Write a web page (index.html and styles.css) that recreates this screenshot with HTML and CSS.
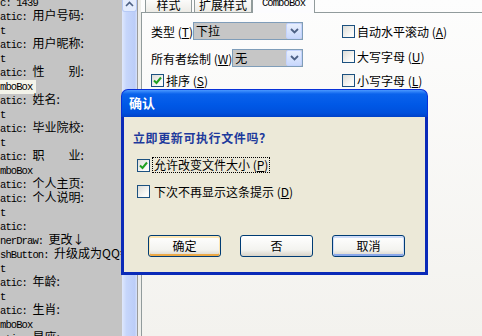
FILE: index.html
```html
<!DOCTYPE html>
<html lang="zh-CN">
<head>
    <meta charset="UTF-8">
    <meta name="viewport" content="width=device-width, initial-scale=1.0">
    <title>确认</title>
    <link rel="stylesheet" href="styles.css">
</head>
<body>
    <div class="screen">
        <!-- 左边: 资源脚本 -->
        <div class="source">
            <div class="ln"><span class="k">c: 1439</span></div>
            <div class="ln"><span class="k">atic: </span>用户号码:</div>
            <div class="ln"><span class="k">t</span></div>
            <div class="ln"><span class="k">atic: </span>用户昵称:</div>
            <div class="ln"><span class="k">t</span></div>
            <div class="ln"><span class="k">atic: </span>性　　别:</div>
            <div class="ln"><span class="k hl">mboBox</span></div>
            <div class="ln"><span class="k">atic: </span>姓名:</div>
            <div class="ln"><span class="k">t</span></div>
            <div class="ln"><span class="k">atic: </span>毕业院校:</div>
            <div class="ln"><span class="k">t</span></div>
            <div class="ln"><span class="k">atic: </span>职　　业:</div>
            <div class="ln"><span class="k">mboBox</span></div>
            <div class="ln"><span class="k">atic: </span>个人主页:</div>
            <div class="ln"><span class="k">atic: </span>个人说明:</div>
            <div class="ln"><span class="k">t</span></div>
            <div class="ln"><span class="k">atic:</span></div>
            <div class="ln"><span class="k">nerDraw: </span>更改↓</div>
            <div class="ln"><span class="k">shButton: </span>升级成为QQ会</div>
            <div class="ln"><span class="k">t</span></div>
            <div class="ln"><span class="k">atic: </span>年龄:</div>
            <div class="ln"><span class="k">t</span></div>
            <div class="ln"><span class="k">atic: </span>生肖:</div>
            <div class="ln"><span class="k">mboBox</span></div>
            <div class="ln"><span class="k">atic: </span>星座:</div>
        </div>
        <!-- 滚动条 -->
        <div class="vscroll">
            <div class="up">
                <svg width="9" height="6" viewBox="0 0 9 6"><polyline points="1,5 4.5,1.5 8,5" fill="none" stroke="#4d6185" stroke-width="1.6"/></svg>
            </div>
        </div>
        <div class="split"></div>
        <!-- 右边: 属性页 -->
        <div class="editor">
            <div class="tabs">
                <div class="tab t1">样式</div>
                <div class="tab t2">扩展样式</div>
                <div class="tab t3 on">ComboBox</div>
            </div>
            <div class="page">
                <div class="col left">
                    <div class="row r1">
                        <span>类型 (<u>T</u>)</span>
                        <div class="combo w1"><span>下拉</span><i class="drop"><svg width="9" height="6" viewBox="0 0 9 6"><polyline points="1,1 4.5,4.5 8,1" fill="none" stroke="#4d6185" stroke-width="1.8"/></svg></i></div>
                    </div>
                    <div class="row r2">
                        <span>所有者绘制 (<u>W</u>)</span>
                        <div class="combo w2"><span>无</span><i class="drop"><svg width="9" height="6" viewBox="0 0 9 6"><polyline points="1,1 4.5,4.5 8,1" fill="none" stroke="#4d6185" stroke-width="1.8"/></svg></i></div>
                    </div>
                    <div class="row r3">
                        <span class="cb"><svg width="9" height="9" viewBox="0 0 9 9"><path d="M1 4.5 L3.5 7 L8 1.5" fill="none" stroke="#21a121" stroke-width="2"/></svg></span>
                        <span>排序 (<u>S</u>)</span>
                    </div>
                </div>
                <div class="col right">
                    <div class="row q1"><span class="cb"></span><span>自动水平滚动 (<u>A</u>)</span></div>
                    <div class="row q2"><span class="cb"></span><span>大写字母 (<u>U</u>)</span></div>
                    <div class="row q3"><span class="cb"></span><span>小写字母 (<u>L</u>)</span></div>
                </div>
            </div>
        </div>

        <!-- 确认对话框 -->
        <div class="dialog">
            <div class="title">确认</div>
            <div class="body">
                <p class="ask">立即更新可执行文件吗？</p>
                <div class="opt o1">
                    <span class="cb"><svg width="9" height="9" viewBox="0 0 9 9"><path d="M1 4.5 L3.5 7 L8 1.5" fill="none" stroke="#21a121" stroke-width="2"/></svg></span>
                    <span class="focus">允许改变文件大小 (<u>P</u>)</span>
                </div>
                <div class="opt o2">
                    <span class="cb"></span>
                    <span class="txt">下次不再显示这条提示 (<u>D</u>)</span>
                </div>
                <div class="btns">
                    <div class="btn def">确定</div>
                    <div class="btn">否</div>
                    <div class="btn cur">取消</div>
                </div>
            </div>
        </div>
    </div>
</body>
</html>
```

FILE: styles.css
```css
*{box-sizing: border-box;}
body{
    margin: 0;
    width: 482px;
    height: 336px;
    overflow: hidden;
    font-family: "Noto Sans CJK SC", "Liberation Sans", sans-serif;
    font-size: 12px;
    color: #000;
}
.screen{
    display: flex;
    height: 336px;
    position: relative;
}
/* 左边源码 */
.source{
    width: 122px;
    flex: none;
    background: #c4c4c4;
    overflow: hidden;
    white-space: nowrap;
}
.ln{height: 14px; line-height: 14px;}
.ln:first-child{margin-top: -6px;}
.k{
    font-family: "Liberation Mono", monospace;
    font-size: 10.5px;
    letter-spacing: -0.9px;
}
.hl{
    display: inline-block;
    background: #f4f4ea;
    padding-right: 4px;
}
/* 滚动条 */
.vscroll{
    width: 15px;
    flex: none;
    background: linear-gradient(90deg, #dfe8fd, #c6d6fb 30%, #bccdf8 85%, #d7e2fb);
}
.up{
    height: 12px;
    border: 1px solid #b5c9f6;
    border-top: none;
    border-radius: 0 0 3px 3px;
    background: #e4ecfd;
    display: flex;
    justify-content: center;
    padding-top: 1px;
}
.split{
    width: 4px;
    flex: none;
    border-left: 1px solid #9a9a9a;
    background: #eeeeea;
}
/* 属性页 */
.editor{
    flex: 1;
    background: linear-gradient(#fdfdfd, #f3f2ee);
}
.tabs{
    display: flex;
    align-items: flex-end;
    height: 13px;
    border-bottom: 1px solid #919b9c;
    padding-left: 4px;
}
.tab{
    height: 16px;
    line-height: 16px;
    text-align: center;
    border: 1px solid #919b9c;
    border-bottom: none;
    border-radius: 3px 3px 0 0;
    background: linear-gradient(#ffffff, #ecebe6);
}
.t1{width: 47px; margin-right: 2px;}
.t2{width: 58px;}
.t3{width: 63px;}
.tab.on{
    height: 18px;
    line-height: 15px;
    margin-bottom: -1px;
    background: #fcfcfe;
    font-family: "Liberation Mono", monospace;
    font-size: 10.5px;
    letter-spacing: -0.9px;
}
.page{
    display: flex;
    height: 323px;
    border-left: 1px solid #919b9c;
    padding: 9px 0 0 9px;
}
.col.left{width: 152px;}
.col.right{margin-left: 39px;}
.row{
    display: flex;
    align-items: center;
    height: 18px;
    white-space: nowrap;
}
.r2{margin-top: 9px;}
.r3{margin-top: 5px; height: 16px;}
.q2{margin-top: 7px;}
.q3{margin-top: 6px;}
u{text-underline-offset: 1px;}
.combo{
    display: flex;
    height: 18px;
    margin-left: auto;
    border: 1px solid #7f9db9;
    background: #c6c6c6;
}
.combo span{flex: 1; padding-left: 2px; line-height: 16px;}
.w1{width: 111px;}
.w2{width: 75px;}
.drop{
    width: 16px;
    display: flex;
    align-items: center;
    justify-content: center;
    border: 1px solid #c3d3fd;
    border-radius: 2px;
    background: linear-gradient(#e8effd, #c9d8fc);
}
/* 复选框 */
.cb{
    width: 13px;
    height: 13px;
    flex: none;
    display: inline-flex;
    align-items: center;
    justify-content: center;
    margin-right: 2px;
    border: 1px solid #1c5180;
    background: linear-gradient(135deg, #dcdcd7, #fbfbf9 75%);
}
/* 对话框 */
.dialog{
    position: absolute;
    left: 121px;
    top: 89px;
    width: 307px;
    height: 186px;
    display: flex;
    flex-direction: column;
}
.title{
    height: 28px;
    padding-left: 7px;
    line-height: 26px;
    color: #fff;
    font-size: 13px;
    font-weight: bold;
    border: 1px solid #0831d9;
    border-bottom: none;
    border-radius: 7px 7px 0 0;
    background: linear-gradient(#4a98ff, #0a62ec 15%, #0058e6 55%, #0050dc 85%, #0042c8);
}
.body{
    flex: 1;
    display: flex;
    flex-direction: column;
    background: #ece9d8;
    border: 3px solid #0a2ab8;
    border-top: none;
}
.ask{
    margin: 13px 0 0 9px;
    line-height: 16px;
    font-weight: bold;
    color: #1d3a9c;
    letter-spacing: 0.6px;
}
.opt{
    display: flex;
    align-items: center;
    height: 16px;
    margin-left: 13px;
}
.o1{margin-top: 11px;}
.o2{margin-top: 10px;}
.focus{
    height: 16px;
    line-height: 14px;
    padding: 0 1px;
    border: 1px dotted #000;
}
.txt{padding-left: 2px;}
.btns{
    display: flex;
    gap: 19px;
    margin: auto 0 15px 24px;
}
.btn{
    width: 73px;
    height: 22px;
    line-height: 20px;
    text-align: center;
    border: 1px solid #003c74;
    border-radius: 3px;
    background: linear-gradient(#ffffff, #f3f3ef 70%, #d8d3c8);
}
.btn.def{box-shadow: inset 0 1px 0 1px #fde6b3, inset 0 -1px 0 1px #eca947;}
.btn.cur{box-shadow: inset 0 1px 0 1px #cfdcf8, inset 0 -1px 0 1px #8aa8ea;}
```
